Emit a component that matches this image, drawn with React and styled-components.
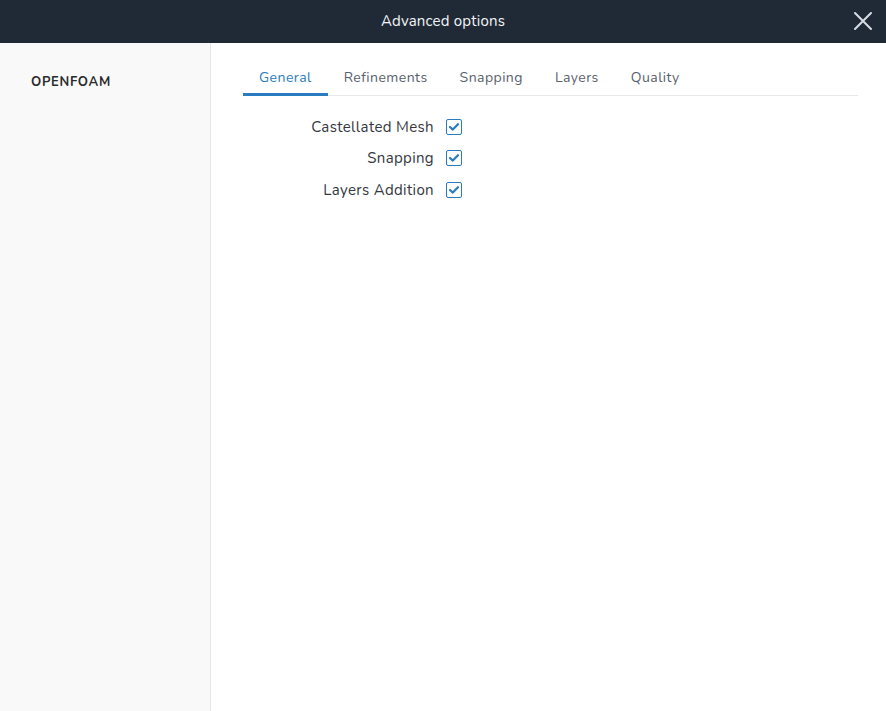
import React, { useState } from 'react';
import styled, { createGlobalStyle } from 'styled-components';

const GlobalStyle = createGlobalStyle`
  html, body {
    margin: 0;
    padding: 0;
    height: 100%;
  }
  body {
    font-family: "Nunito", "Lato", "Noto Sans", sans-serif;
    background: #ffffff;
  }
  #root {
    height: 100%;
  }
`;

const tabs = ['General', 'Refinements', 'Snapping', 'Layers', 'Quality'];

const options = [
    { label: 'Castellated Mesh', checked: true },
    { label: 'Snapping', checked: true },
    { label: 'Layers Addition', checked: true },
];

const App = () => {
    const [active, setActive] = useState('General');
    const [values, setValues] = useState(options.map(o => o.checked));

    const toggle = (i) => {
        setValues(values.map((v, j) => (j === i ? !v : v)));
    };

    return (
        <>
            <GlobalStyle />
            <Dialog>
                <Header>
                    <Title>Advanced options</Title>
                    <CloseButton aria-label="close">
                        <svg width="20" height="20" viewBox="0 0 20 20">
                            <path d="M2 2 L18 18 M18 2 L2 18" stroke="#d9dde3" strokeWidth="2" strokeLinecap="round" />
                        </svg>
                    </CloseButton>
                </Header>
                <Body>
                    <Sidebar>
                        <SideItem>OPENFOAM</SideItem>
                    </Sidebar>
                    <Content>
                        <TabBar>
                            {tabs.map(t => (
                                <Tab key={t} $active={t === active} onClick={() => setActive(t)}>
                                    {t}
                                </Tab>
                            ))}
                        </TabBar>
                        <Form>
                            {options.map((o, i) => (
                                <Row key={o.label}>
                                    <Label>{o.label}</Label>
                                    <Checkbox $checked={values[i]} onClick={() => toggle(i)}>
                                        {values[i] && (
                                            <svg width="10" height="8" viewBox="0 0 10 8">
                                                <path d="M1 4 L3.8 6.6 L9 1.2" fill="none" stroke="#2a7bbf" strokeWidth="2.2" strokeLinecap="round" strokeLinejoin="round" />
                                            </svg>
                                        )}
                                    </Checkbox>
                                </Row>
                            ))}
                        </Form>
                    </Content>
                </Body>
            </Dialog>
        </>
    );
};

const Dialog = styled.div`
    display: flex;
    flex-direction: column;
    height: 100vh;
`;

const Header = styled.div`
    height: 43px;
    background: #202a37;
    display: flex;
    align-items: center;
    justify-content: center;
    position: relative;
    flex-shrink: 0;
    box-sizing: border-box;
    padding-bottom: 2px;
`;

const Title = styled.span`
    color: #f2f4f6;
    font-size: 15px;
    letter-spacing: 0.2px;
`;

const CloseButton = styled.button`
    position: absolute;
    right: 13px;
    top: 11px;
    background: none;
    border: none;
    padding: 0;
    width: 20px;
    height: 20px;
    cursor: pointer;
    display: flex;
`;

const Body = styled.div`
    flex: 1;
    display: flex;
`;

const Sidebar = styled.div`
    width: 211px;
    flex-shrink: 0;
    background: #f9f9f9;
    border-right: 1px solid #e6e6e6;
    padding: 30px 0 0 31px;
    box-sizing: border-box;
`;

const SideItem = styled.div`
    font-size: 13px;
    font-weight: 700;
    color: #2b2b2b;
    letter-spacing: 0.7px;
`;

const Content = styled.div`
    flex: 1;
    padding: 18px 28px 0 32px;
`;

const TabBar = styled.div`
    display: flex;
    border-bottom: 1px solid #e8e8e8;
`;

const Tab = styled.div`
    padding: 7px 16px 6px;
    font-size: 14px;
    color: ${p => (p.$active ? '#2a7bbf' : '#58606c')};
    border-bottom: 3px solid ${p => (p.$active ? '#2a7bbf' : 'transparent')};
    margin-bottom: -1px;
    cursor: pointer;
    letter-spacing: 0.45px;
`;

const Form = styled.div`
    padding-top: 20px;
    display: flex;
    flex-direction: column;
    gap: 10.5px;
`;

const Row = styled.div`
    display: flex;
    align-items: center;
    gap: 12px;
    height: 21px;
`;

const Label = styled.span`
    width: 191px;
    text-align: right;
    font-size: 15px;
    color: #333840;
    letter-spacing: 0.35px;
`;

const Checkbox = styled.div`
    width: 14px;
    height: 14px;
    border: 1px solid #2a7bbf;
    border-radius: 2px;
    display: flex;
    align-items: center;
    justify-content: center;
    cursor: pointer;
    background: #fff;
`;

export default App;
